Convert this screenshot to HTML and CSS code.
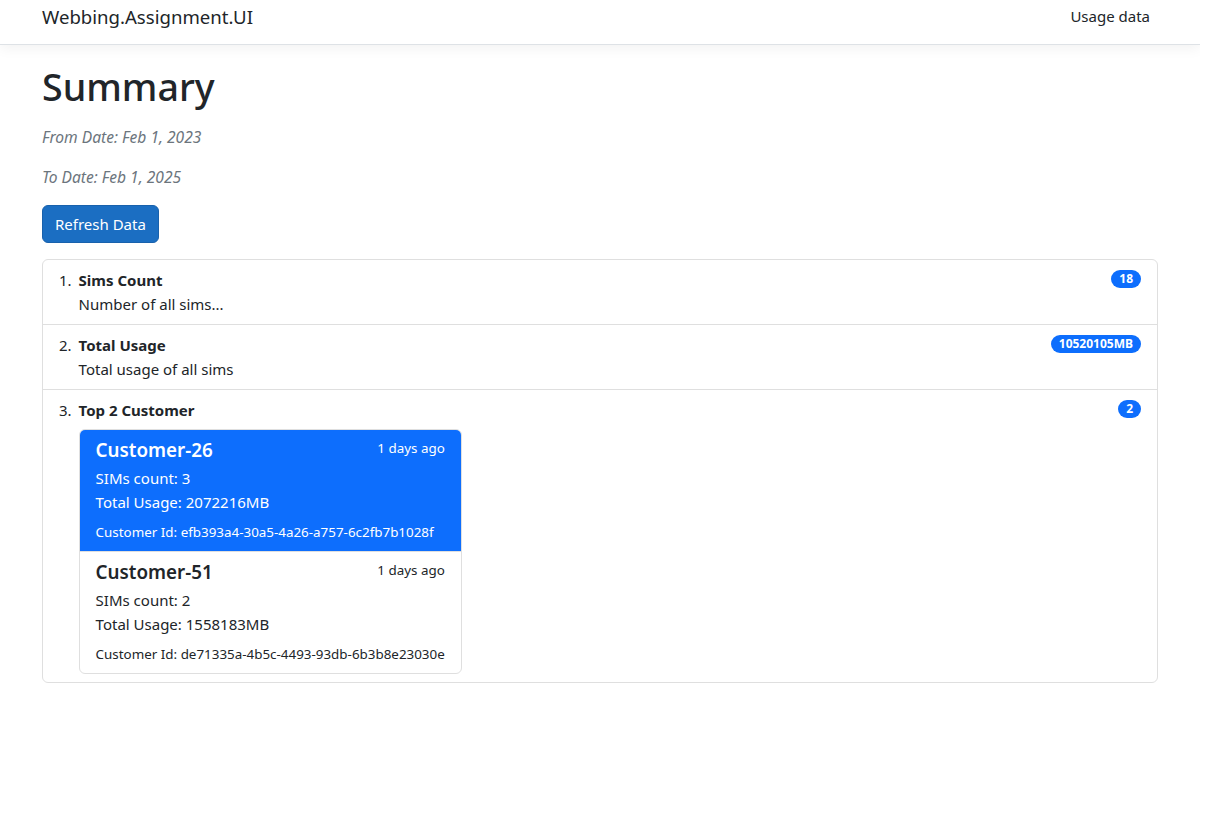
FILE: index.html
```html
<!DOCTYPE html>
<html lang="en">
<head>
<meta charset="utf-8">
<title>Summary - Webbing.Assignment.UI</title>
<link rel="stylesheet" href="styles.css">
</head>
<body>
<header class="navbar">
  <div class="container nav-inner">
    <a class="brand" href="#">Webbing.Assignment.UI</a>
    <a class="nav-link" href="#">Usage data</a>
  </div>
</header>
<main class="container">
  <h1 class="title">Summary</h1>
  <p class="muted">From Date: Feb 1, 2023</p>
  <p class="muted">To Date: Feb 1, 2025</p>
  <button class="btn" type="button">Refresh Data</button>
  <ol class="list-group">
    <li class="list-item">
      <span class="num">1.</span>
      <div class="item-body">
        <div class="item-title">Sims Count</div>
        Number of all sims...
      </div>
      <span class="badge">18</span>
    </li>
    <li class="list-item">
      <span class="num">2.</span>
      <div class="item-body">
        <div class="item-title">Total Usage</div>
        Total usage of all sims
      </div>
      <span class="badge">10520105MB</span>
    </li>
    <li class="list-item">
      <span class="num">3.</span>
      <div class="item-body">
        <div class="item-title">Top 2 Customer</div>
        <div class="cust-list">
          <a class="cust active" href="#">
            <div class="cust-head">
              <h5 class="cust-name">Customer-26</h5>
              <small class="cust-time">1 days ago</small>
            </div>
            <p class="cust-lines">SIMs count: 3<br>Total Usage: 2072216MB</p>
            <small class="cust-id">Customer Id: efb393a4-30a5-4a26-a757-6c2fb7b1028f</small>
          </a>
          <a class="cust" href="#">
            <div class="cust-head">
              <h5 class="cust-name">Customer-51</h5>
              <small class="cust-time">1 days ago</small>
            </div>
            <p class="cust-lines">SIMs count: 2<br>Total Usage: 1558183MB</p>
            <small class="cust-id">Customer Id: de71335a-4b5c-4493-93db-6b3b8e23030e</small>
          </a>
        </div>
      </div>
      <span class="badge">2</span>
    </li>
  </ol>
</main>
</body>
</html>
```

FILE: styles.css
```css
* { box-sizing: border-box; }
html, body { margin: 0; padding: 0; }
body {
  font-family: "Noto Sans", "Open Sans", sans-serif;
  font-size: 15px;
  line-height: 24px;
  color: #212529;
  background: #fff;
  width: 1200px;
}
a { text-decoration: none; color: inherit; }
.container {
  width: 1140px;
  margin: 0 auto;
  padding: 0 12px;
}
.navbar {
  height: 45px;
  border-bottom: 1px solid #dee2e6;
  box-shadow: 0 4px 12px rgba(0,0,0,.05);
  margin-bottom: 18px;
  background: #fff;
}
.nav-inner {
  display: flex;
  justify-content: space-between;
  align-items: flex-start;
  height: 44px;
}
.brand {
  font-size: 18.6px;
  line-height: 30px;
  padding-top: 2px;
  color: #212529;
}
.nav-link {
  font-size: 15px;
  line-height: 24px;
  padding: 4px 8px 0;
  color: #212529;
}
.title {
  font-size: 37.6px;
  font-weight: 500;
  line-height: 48px;
  margin: 0 0 14px;
}
.muted {
  color: #6c757d;
  font-style: italic;
  font-size: 15.6px;
  margin: 0 0 16px;
}
.btn {
  font-family: inherit;
  font-size: 15px;
  line-height: 24px;
  color: #fff;
  background: #1b6ec2;
  border: 1px solid #1861ac;
  border-radius: 6px;
  padding: 6px 12px;
  margin-bottom: 16px;
}
.list-group {
  list-style: none;
  margin: 0;
  padding: 0;
  border: 1px solid #dfdfdf;
  border-radius: 6px;
}
.list-item {
  display: flex;
  align-items: flex-start;
  padding: 8px 16px;
  border-top: 1px solid #dfdfdf;
}
.list-item:first-child { border-top: 0; }
.num { margin-right: 7px; }
.item-body { flex: 1; }
.item-title { font-weight: 700; }
.badge {
  background: #0d6efd;
  color: #fff;
  font-size: 12px;
  font-weight: 700;
  line-height: 12px;
  padding: 3px 8px;
  border-radius: 50rem;
  margin-top: 2px;
}
.cust-list {
  display: flex;
  flex-direction: column;
  width: fit-content;
  margin-top: 7px;
  border: 1px solid #dfdfdf;
  border-radius: 6px;
  overflow: hidden;
}
.cust {
  display: block;
  padding: 8px 16px;
  color: #212529;
  border-top: 1px solid #dfdfdf;
}
.cust:first-child { border-top: 0; }
.cust.active {
  background: #0d6efd;
  color: #fff;
}
.cust-head {
  display: flex;
  justify-content: space-between;
}
.cust-name {
  font-size: 18.8px;
  font-weight: 600;
  line-height: 24px;
  margin: 0 0 4px;
}
.cust-time { font-size: 13.4px; line-height: 21px; }
.cust-lines { margin: 0 0 8px; }
.cust-id { display: block; font-size: 13.4px; line-height: 21px; }
```
